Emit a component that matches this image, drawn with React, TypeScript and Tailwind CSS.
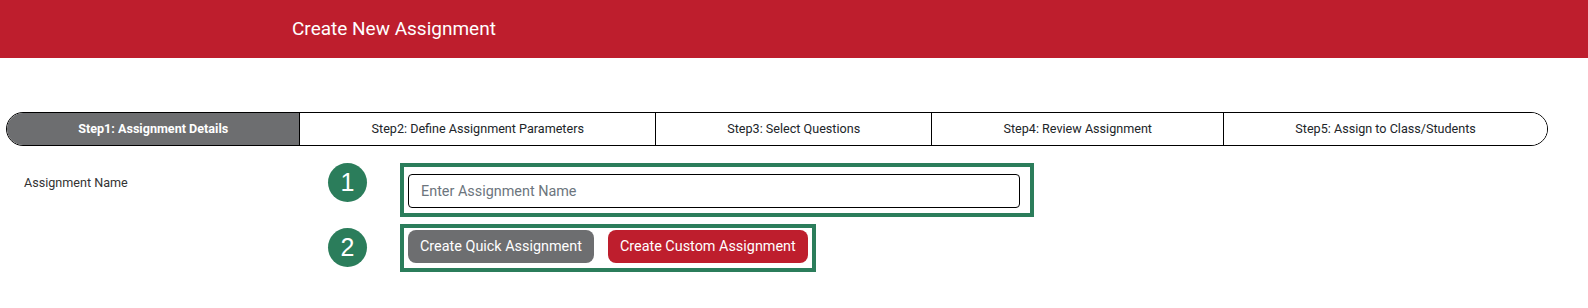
const steps = [
  "Step1: Assignment Details",
  "Step2: Define Assignment Parameters",
  "Step3: Select Questions",
  "Step4: Review Assignment",
  "Step5: Assign to Class/Students",
];

function StepBadge({ n }: { n: number }) {
  return (
    <div className="flex h-[39px] w-[39px] shrink-0 items-center justify-center rounded-full bg-[#2b7d5b] font-['Liberation_Sans',Arial,sans-serif] text-[25px] leading-none text-white">
      {n}
    </div>
  );
}

export default function App() {
  const active = 0;

  return (
    <div className="min-h-[308px] bg-white font-['Roboto',sans-serif] text-[#212529]">
      <header className="flex h-[58px] items-center bg-[#be1e2d] pl-[292px]">
        <h1 className="text-[19px] font-normal text-white">Create New Assignment</h1>
      </header>

      <nav className="ml-[6px] mt-[54px] flex h-[34px] w-[1542px] overflow-hidden rounded-full border border-black">
        {steps.map((step, i) => (
          <div
            key={step}
            className={`flex flex-auto items-center justify-center text-[12.6px] ${
              i > 0 ? "border-l border-black" : ""
            } ${i === active ? "bg-[#6d6e70] font-bold text-white" : "bg-white text-[#212529]"}`}
          >
            {step}
          </div>
        ))}
      </nav>

      <div className="mt-[17px] flex items-start">
        <label className="w-[328px] shrink-0 pl-6 pt-[12px] text-[12.6px] leading-[15px] text-[#333]">
          Assignment Name
        </label>
        <StepBadge n={1} />
        <div className="ml-[33px] w-[634px] border-4 border-[#2b7d5b] pb-[5px] pl-1 pr-[10px] pt-[7px]">
          <input
            type="text"
            placeholder="Enter Assignment Name"
            className="h-[34px] w-full rounded border border-black px-3 text-[14.4px] text-[#212529] placeholder:text-[#6c757d] focus:outline-none"
          />
        </div>
      </div>

      <div className="mt-[7px] flex items-start">
        <div className="w-[328px] shrink-0" />
        <div className="mt-1">
          <StepBadge n={2} />
        </div>
        <div className="ml-[33px] flex w-[416px] gap-[14px] border-4 border-[#2b7d5b] pb-[5px] pl-1 pt-[2px]">
          <button
            type="button"
            className="h-[33px] rounded-lg bg-[#6d6e70] px-3 text-[14.4px] text-white"
          >
            Create Quick Assignment
          </button>
          <button
            type="button"
            className="h-[33px] rounded-lg bg-[#be1e2d] px-3 text-[14.4px] text-white"
          >
            Create Custom Assignment
          </button>
        </div>
      </div>
    </div>
  );
}
